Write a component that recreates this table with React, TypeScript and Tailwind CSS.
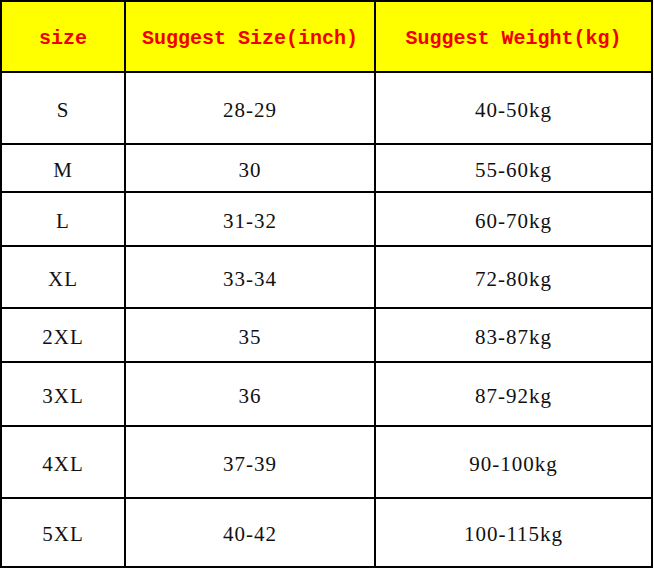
import React from "react";

const rows: { h: string; a: string; b: string; c: string }[] = [
  { h: "h-[72px]", a: "S", b: "28-29", c: "40-50kg" },
  { h: "h-[48px]", a: "M", b: "30", c: "55-60kg" },
  { h: "h-[54px]", a: "L", b: "31-32", c: "60-70kg" },
  { h: "h-[62px]", a: "XL", b: "33-34", c: "72-80kg" },
  { h: "h-[54px]", a: "2XL", b: "35", c: "83-87kg" },
  { h: "h-[64px]", a: "3XL", b: "36", c: "87-92kg" },
  { h: "h-[72px]", a: "4XL", b: "37-39", c: "90-100kg" },
  { h: "h-[69px]", a: "5XL", b: "40-42", c: "100-115kg" },
];

export default function App() {
  return (
    <div className="w-[654px] h-[568px] bg-white">
      <div className="w-[653px] border-x-2 border-b-2 border-black">
        <div className="flex h-[71px] border-t-2 border-black bg-[#ffff00] font-['Liberation_Mono',monospace] font-bold text-[20px] text-[#f00000]">
          <div className="w-[122px] flex items-center justify-center pt-[4px]">size</div>
          <div className="w-[250px] border-l-2 border-black flex items-center justify-center pt-[4px]">Suggest Size(inch)</div>
          <div className="flex-1 border-l-2 border-black flex items-center justify-center pt-[4px]">Suggest Weight(kg)</div>
        </div>
        {rows.map((r) => (
          <div
            key={r.a}
            className={`flex ${r.h} border-t-2 border-black font-['Liberation_Serif',serif] text-[21px] tracking-[1px] text-[#111]`}
          >
            <div className="w-[122px] flex items-center justify-center pt-[5px]">{r.a}</div>
            <div className="w-[250px] border-l-2 border-black flex items-center justify-center pt-[5px]">{r.b}</div>
            <div className="flex-1 border-l-2 border-black flex items-center justify-center pt-[5px]">{r.c}</div>
          </div>
        ))}
      </div>
    </div>
  );
}
